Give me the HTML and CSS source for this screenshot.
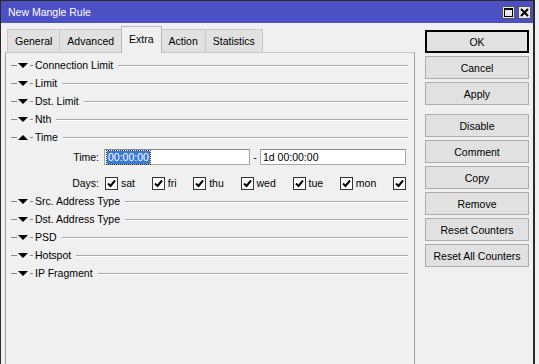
FILE: index.html
```html
<!DOCTYPE html>
<html>
<head>
<meta charset="utf-8">
<link rel="stylesheet" href="styles.css">
</head>
<body>
<div class="window">
  <div class="titlebar">
    <span class="title">New Mangle Rule</span>
    <div class="tb-buttons">
      <span class="tb-btn"><svg width="11" height="11" viewBox="0 0 11 11"><rect x="1.5" y="1.5" width="8" height="8" fill="none" stroke="#000" stroke-width="1"/><rect x="1" y="1" width="9" height="2" fill="#000"/></svg></span>
      <span class="tb-btn"><svg width="11" height="11" viewBox="0 0 11 11"><path d="M2 2 L9 9 M9 2 L2 9" stroke="#000" stroke-width="2"/></svg></span>
    </div>
  </div>
  <div class="main">
    <div class="left">
      <div class="tabs">
        <span class="tab">General</span>
        <span class="tab">Advanced</span>
        <span class="tab active">Extra</span>
        <span class="tab">Action</span>
        <span class="tab">Statistics</span>
      </div>
      <div class="panel">
        <div class="section"><span class="dash"></span><svg class="tri" width="10" height="5" viewBox="0 0 10 5"><polygon points="0,0 10,0 5,5" fill="#000"/></svg><span class="dash small"></span><span class="label">Connection Limit</span><span class="line"></span></div>
        <div class="section"><span class="dash"></span><svg class="tri" width="10" height="5" viewBox="0 0 10 5"><polygon points="0,0 10,0 5,5" fill="#000"/></svg><span class="dash small"></span><span class="label">Limit</span><span class="line"></span></div>
        <div class="section"><span class="dash"></span><svg class="tri" width="10" height="5" viewBox="0 0 10 5"><polygon points="0,0 10,0 5,5" fill="#000"/></svg><span class="dash small"></span><span class="label">Dst. Limit</span><span class="line"></span></div>
        <div class="section"><span class="dash"></span><svg class="tri" width="10" height="5" viewBox="0 0 10 5"><polygon points="0,0 10,0 5,5" fill="#000"/></svg><span class="dash small"></span><span class="label">Nth</span><span class="line"></span></div>
        <div class="section"><span class="dash"></span><svg class="tri" width="10" height="5" viewBox="0 0 10 5"><polygon points="0,5 10,5 5,0" fill="#000"/></svg><span class="dash small"></span><span class="label">Time</span><span class="line"></span></div>
        <div class="field-row time-row">
          <span class="flabel">Time:</span>
          <div class="input"><span class="sel">00:00:00</span></div>
          <span class="range-dash">-</span>
          <div class="input">1d 00:00:00</div>
        </div>
        <div class="field-row days-row">
          <span class="flabel">Days:</span>
          <div class="days">
            <span class="day"><span class="cb"><svg width="11" height="11" viewBox="0 0 11 11"><path d="M2 5.5 L4.5 8 L9 2.5" fill="none" stroke="#000" stroke-width="2"/></svg></span>sat</span>
            <span class="day"><span class="cb"><svg width="11" height="11" viewBox="0 0 11 11"><path d="M2 5.5 L4.5 8 L9 2.5" fill="none" stroke="#000" stroke-width="2"/></svg></span>fri</span>
            <span class="day"><span class="cb"><svg width="11" height="11" viewBox="0 0 11 11"><path d="M2 5.5 L4.5 8 L9 2.5" fill="none" stroke="#000" stroke-width="2"/></svg></span>thu</span>
            <span class="day"><span class="cb"><svg width="11" height="11" viewBox="0 0 11 11"><path d="M2 5.5 L4.5 8 L9 2.5" fill="none" stroke="#000" stroke-width="2"/></svg></span>wed</span>
            <span class="day"><span class="cb"><svg width="11" height="11" viewBox="0 0 11 11"><path d="M2 5.5 L4.5 8 L9 2.5" fill="none" stroke="#000" stroke-width="2"/></svg></span>tue</span>
            <span class="day"><span class="cb"><svg width="11" height="11" viewBox="0 0 11 11"><path d="M2 5.5 L4.5 8 L9 2.5" fill="none" stroke="#000" stroke-width="2"/></svg></span>mon</span>
            <span class="day"><span class="cb"><svg width="11" height="11" viewBox="0 0 11 11"><path d="M2 5.5 L4.5 8 L9 2.5" fill="none" stroke="#000" stroke-width="2"/></svg></span></span>
          </div>
        </div>
        <div class="section"><span class="dash"></span><svg class="tri" width="10" height="5" viewBox="0 0 10 5"><polygon points="0,0 10,0 5,5" fill="#000"/></svg><span class="dash small"></span><span class="label">Src. Address Type</span><span class="line"></span></div>
        <div class="section"><span class="dash"></span><svg class="tri" width="10" height="5" viewBox="0 0 10 5"><polygon points="0,0 10,0 5,5" fill="#000"/></svg><span class="dash small"></span><span class="label">Dst. Address Type</span><span class="line"></span></div>
        <div class="section"><span class="dash"></span><svg class="tri" width="10" height="5" viewBox="0 0 10 5"><polygon points="0,0 10,0 5,5" fill="#000"/></svg><span class="dash small"></span><span class="label">PSD</span><span class="line"></span></div>
        <div class="section"><span class="dash"></span><svg class="tri" width="10" height="5" viewBox="0 0 10 5"><polygon points="0,0 10,0 5,5" fill="#000"/></svg><span class="dash small"></span><span class="label">Hotspot</span><span class="line"></span></div>
        <div class="section"><span class="dash"></span><svg class="tri" width="10" height="5" viewBox="0 0 10 5"><polygon points="0,0 10,0 5,5" fill="#000"/></svg><span class="dash small"></span><span class="label">IP Fragment</span><span class="line"></span></div>
      </div>
    </div>
    <div class="buttons">
      <span class="btn default">OK</span>
      <span class="btn">Cancel</span>
      <span class="btn">Apply</span>
      <span class="btn group">Disable</span>
      <span class="btn">Comment</span>
      <span class="btn">Copy</span>
      <span class="btn">Remove</span>
      <span class="btn">Reset Counters</span>
      <span class="btn">Reset All Counters</span>
    </div>
  </div>
</div>
</body>
</html>
```
FILE: styles.css
```css
html, body {
  margin: 0;
  padding: 0;
  background: #f0f0f0;
  font-family: "Liberation Sans", Arial, sans-serif;
  font-size: 10.5px;
  color: #000;
}
.window {
  width: 535px;
  height: 364px;
  box-sizing: border-box;
  border-left: 1px solid #2a2a2a;
  border-right: 2px solid #2a2a2a;
  display: flex;
  flex-direction: column;
  background: #f0f0f0;
}
.titlebar {
  height: 23px;
  box-sizing: border-box;
  border-top: 1px solid #2a2a2a;
  background: #4d50c5;
  display: flex;
  align-items: center;
  justify-content: space-between;
  padding: 0 2px 0 7px;
}
.title {
  color: #fff;
  font-size: 10.5px;
}
.tb-buttons {
  display: flex;
  gap: 3px;
}
.tb-btn {
  width: 13px;
  height: 13px;
  box-sizing: border-box;
  background: #e8e8e8;
  border: 1px solid #555;
  display: flex;
  align-items: center;
  justify-content: center;
}
.tb-btn svg { display: block; }
.main {
  flex: 1;
  display: flex;
  padding: 3px 0 0 4px;
  min-height: 0;
}
.left {
  width: 410px;
  display: flex;
  flex-direction: column;
}
.tabs {
  height: 26px;
  display: flex;
  align-items: flex-end;
  padding-left: 2px;
  position: relative;
  z-index: 1;
}
.tab {
  height: 23px;
  box-sizing: border-box;
  padding: 0 7px;
  display: flex;
  align-items: center;
  background: #e1e1e1;
  border: 1px solid #c9c9c9;
  border-bottom: none;
  margin-right: -1px;
}
.tab.active {
  height: 27px;
  margin-bottom: -1px;
  background: #f0f0f0;
  border-color: #b8b8b8;
  padding-bottom: 2px;
  position: relative;
  z-index: 2;
}
.panel {
  flex: 1;
  border: 1px solid #a0a0a0;
  border-top-color: #c8c8c8;
  border-bottom: none;
  padding-top: 3px;
}
.section {
  height: 18px;
  display: flex;
  align-items: center;
  padding-left: 5px;
  padding-right: 6px;
}
.dash {
  width: 6px;
  height: 1px;
  background: #8a8a8a;
  margin-right: 1px;
}
.dash.small {
  width: 3px;
  margin: 0 2px 0 2px;
}
.tri { display: block; }
.label {
  white-space: nowrap;
}
.line {
  flex: 1;
  height: 1px;
  background: #a8a8a8;
  margin-left: 5px;
  box-shadow: 0 1px 0 #fff;
}
.field-row {
  display: flex;
  align-items: center;
}
.time-row {
  height: 16px;
  margin-top: 3px;
}
.days-row {
  height: 18px;
  margin-top: 9px;
}
.flabel {
  width: 93px;
  text-align: right;
  margin-right: 5px;
}
.input {
  width: 146px;
  height: 16px;
  box-sizing: border-box;
  background: #fff;
  border: 1px solid #a5a5a5;
  border-top-color: #8a8a8a;
  display: flex;
  align-items: center;
  padding-left: 2px;
  white-space: nowrap;
}
.sel {
  background: #3a7ad8;
  color: #fff;
  padding: 0 1px;
  line-height: 13px;
  outline: 1px dotted #333;
}
.range-dash {
  width: 10px;
  text-align: center;
}
.days {
  width: 301px;
  display: flex;
  justify-content: space-between;
  margin-left: 1px;
}
.day {
  display: flex;
  align-items: center;
}
.cb {
  width: 13px;
  height: 13px;
  box-sizing: border-box;
  border: 1px solid #333;
  background: #fff;
  display: flex;
  align-items: center;
  justify-content: center;
  margin-right: 3px;
}
.day:last-child .cb { margin-right: 0; }
.cb svg { display: block; }
.buttons {
  width: 104px;
  margin-left: 10px;
  padding-top: 4px;
  display: flex;
  flex-direction: column;
}
.btn {
  height: 23px;
  box-sizing: border-box;
  border: 1px solid #adadad;
  background: #e1e1e1;
  display: flex;
  align-items: center;
  justify-content: center;
  margin-bottom: 3px;
  white-space: nowrap;
}
.btn.default {
  border: 2px solid #000;
}
.btn.group {
  margin-top: 6px;
}
```
